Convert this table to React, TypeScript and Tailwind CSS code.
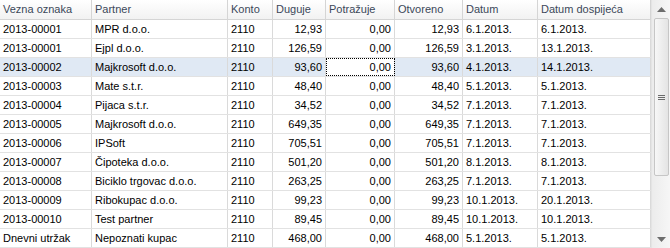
import React from "react";

type Row = {
  veza: string;
  partner: string;
  konto: string;
  duguje: string;
  potrazuje: string;
  otvoreno: string;
  datum: string;
  dospijece: string;
};

const rows: Row[] = [
  { veza: "2013-00001", partner: "MPR d.o.o.", konto: "2110", duguje: "12,93", potrazuje: "0,00", otvoreno: "12,93", datum: "6.1.2013.", dospijece: "6.1.2013." },
  { veza: "2013-00001", partner: "Ejpl d.o.o.", konto: "2110", duguje: "126,59", potrazuje: "0,00", otvoreno: "126,59", datum: "3.1.2013.", dospijece: "13.1.2013." },
  { veza: "2013-00002", partner: "Majkrosoft d.o.o.", konto: "2110", duguje: "93,60", potrazuje: "0,00", otvoreno: "93,60", datum: "4.1.2013.", dospijece: "14.1.2013." },
  { veza: "2013-00003", partner: "Mate s.t.r.", konto: "2110", duguje: "48,40", potrazuje: "0,00", otvoreno: "48,40", datum: "5.1.2013.", dospijece: "5.1.2013." },
  { veza: "2013-00004", partner: "Pijaca s.t.r.", konto: "2110", duguje: "34,52", potrazuje: "0,00", otvoreno: "34,52", datum: "7.1.2013.", dospijece: "7.1.2013." },
  { veza: "2013-00005", partner: "Majkrosoft d.o.o.", konto: "2110", duguje: "649,35", potrazuje: "0,00", otvoreno: "649,35", datum: "7.1.2013.", dospijece: "7.1.2013." },
  { veza: "2013-00006", partner: "IPSoft", konto: "2110", duguje: "705,51", potrazuje: "0,00", otvoreno: "705,51", datum: "7.1.2013.", dospijece: "7.1.2013." },
  { veza: "2013-00007", partner: "Čipoteka d.o.o.", konto: "2110", duguje: "501,20", potrazuje: "0,00", otvoreno: "501,20", datum: "8.1.2013.", dospijece: "8.1.2013." },
  { veza: "2013-00008", partner: "Biciklo trgovac d.o.o.", konto: "2110", duguje: "263,25", potrazuje: "0,00", otvoreno: "263,25", datum: "7.1.2013.", dospijece: "7.1.2013." },
  { veza: "2013-00009", partner: "Ribokupac d.o.o.", konto: "2110", duguje: "99,23", potrazuje: "0,00", otvoreno: "99,23", datum: "10.1.2013.", dospijece: "20.1.2013." },
  { veza: "2013-00010", partner: "Test partner", konto: "2110", duguje: "89,45", potrazuje: "0,00", otvoreno: "89,45", datum: "10.1.2013.", dospijece: "10.1.2013." },
  { veza: "Dnevni utržak", partner: "Nepoznati kupac", konto: "2110", duguje: "468,00", potrazuje: "0,00", otvoreno: "468,00", datum: "5.1.2013.", dospijece: "5.1.2013." },
];

const headers = [
  "Vezna oznaka",
  "Partner",
  "Konto",
  "Duguje",
  "Potražuje",
  "Otvoreno",
  "Datum",
  "Datum dospijeća",
];

// column widths in px, right border included
const cols = "grid-cols-[92px_136px_45px_53px_69px_68px_75px_113px]";

const SELECTED = 2;

export default function App() {
  return (
    <div
      className="flex w-[670px] h-[248px] overflow-hidden bg-white text-[11px] text-black"
      style={{ fontFamily: '"Liberation Sans", Arial, sans-serif' }}
    >
      {/* Grid */}
      <div className="w-[651px] flex flex-col">
        {/* Header */}
        <div className={`grid ${cols} h-[20px] border-b border-[#d5d5d5] bg-gradient-to-b from-white to-[#f2f2f2]`}>
          {headers.map((h) => (
            <div
              key={h}
              className="border-r border-[#d5d5d5] pl-[3px] leading-[19px] text-[#3b4859] whitespace-nowrap overflow-hidden"
            >
              {h}
            </div>
          ))}
        </div>

        {/* Rows */}
        {rows.map((r, i) => {
          const sel = i === SELECTED;
          const cell = `border-r border-[#dadada] leading-[18px] whitespace-nowrap overflow-hidden ${
            sel ? "bg-[#e0e9f4]" : ""
          }`;
          return (
            <div key={i} className={`grid ${cols} h-[19px] border-b border-[#e2e2e2]`}>
              <div className={`${cell} pl-[3px]`}>{r.veza}</div>
              <div className={`${cell} pl-[3px]`}>{r.partner}</div>
              <div className={`${cell} pl-[3px]`}>{r.konto}</div>
              <div className={`${cell} pr-[3px] text-right`}>{r.duguje}</div>
              <div
                className={`border-r border-[#dadada] leading-[18px] pr-[3px] text-right ${
                  sel ? "outline-1 outline-dotted outline-black -outline-offset-1" : ""
                }`}
              >
                {r.potrazuje}
              </div>
              <div className={`${cell} pr-[3px] text-right`}>{r.otvoreno}</div>
              <div className={`${cell} pl-[3px]`}>{r.datum}</div>
              <div className={`${cell} pl-[3px]`}>{r.dospijece}</div>
            </div>
          );
        })}
      </div>

      {/* Vertical scrollbar */}
      <div className="w-[19px] h-full flex flex-col border-l border-[#e4e4e4] bg-gradient-to-r from-[#ececec] to-[#f6f6f6]">
        <div className="h-[18px] flex items-center justify-center">
          <svg width="9" height="5" viewBox="0 0 9 5">
            <path d="M4.5 0 L9 5 L0 5 Z" fill="#6d6d6d" />
          </svg>
        </div>
        <div className="ml-[2px] mr-px h-[158px] rounded-[2px] border border-[#c6c6c6] bg-gradient-to-r from-[#f7f7f7] to-[#e4e4e4] flex items-center justify-center">
          <div className="flex flex-col gap-px">
            <div className="w-[7px] h-px bg-[#6b6b6b]" />
            <div className="w-[7px] h-px bg-[#6b6b6b]" />
            <div className="w-[7px] h-px bg-[#6b6b6b]" />
          </div>
        </div>
        <div className="flex-1" />
        <div className="h-[18px] flex items-center justify-center">
          <svg width="9" height="5" viewBox="0 0 9 5">
            <path d="M0 0 L9 0 L4.5 5 Z" fill="#6d6d6d" />
          </svg>
        </div>
      </div>
    </div>
  );
}
